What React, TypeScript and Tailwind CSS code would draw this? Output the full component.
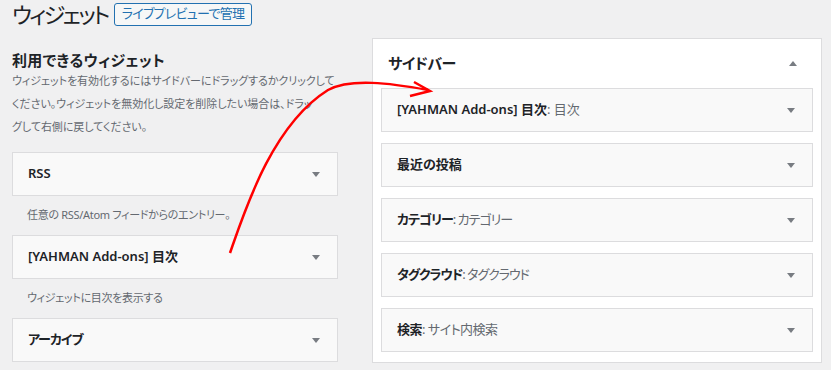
import React from "react"

const font = "font-['Noto_Sans','Noto_Sans_CJK_JP',sans-serif] [font-feature-settings:'palt']"

function Arrow({ up = false }: { up?: boolean }) {
  return (
    <svg width="8" height="5" viewBox="0 0 8 5" className="shrink-0">
      <polygon points={up ? "0,5 8,5 4,0" : "0,0 8,0 4,5"} fill="#787c82" />
    </svg>
  )
}

function WidgetBox({ title, sub, tight }: { title: string; sub?: string; tight?: string }) {
  return (
    <div className="h-[44px] flex items-center justify-between border border-[#dcdcde] bg-[#f9f9f9] pl-[15px] pr-[17px]">
      <div className={`text-[13px] text-[#1d2327] ${tight ?? ""}`}>
        <span className="font-semibold">{title}</span>
        {sub && <span className="text-[#646970]">: {sub}</span>}
      </div>
      <Arrow />
    </div>
  )
}

function Desc({ children }: { children: React.ReactNode }) {
  return (
    <div className="h-[39px] flex items-center pl-[15px] text-[11px] text-[#646970] tracking-[-0.3px]">
      {children}
    </div>
  )
}

export default function App() {
  const sidebar = [
    { title: "[YAHMAN Add-ons] 目次", sub: "目次" },
    { title: "最近の投稿" },
    { title: "カテゴリー", sub: "カテゴリー", tight: "tracking-[-1px]" },
    { title: "タグクラウド", sub: "タグクラウド", tight: "tracking-[-1px]" },
    { title: "検索", sub: "サイト内検索", tight: "tracking-[-0.5px]" },
  ]

  return (
    <div className={`relative w-[831px] h-[370px] overflow-hidden bg-[#f0f0f1] ${font}`}>
      {/* header */}
      <div className="flex items-center gap-[4px] pl-[12px] pt-[1px] h-[27px]">
        <h1 className="whitespace-nowrap pr-[2px] text-[22px] leading-[28px] text-[#1d2327] tracking-[-2.5px]">
          ウィジェット
        </h1>
        <button className="h-[23px] px-[7px] border border-[#2271b1] rounded-[3px] bg-[#f6f7f7] text-[13px] text-[#2271b1] tracking-[-0.7px]">
          ライブプレビューで管理
        </button>
      </div>

      <div className="flex pl-[12px] gap-[34px] mt-[11px]">
        {/* available widgets */}
        <div className="w-[326px] shrink-0">
          <h2 className="mt-[13px] text-[15px] leading-[18px] font-bold text-[#1d2327] tracking-[0.3px]">
            利用できるウィジェット
          </h2>
          <p className="text-[11px] leading-[23px] text-[#646970] tracking-[-0.05px] whitespace-nowrap">
            ウィジェットを有効化するにはサイドバーにドラッグするかクリックして
            <br />
            ください。ウィジェットを無効化し設定を削除したい場合は、ドラッ
            <br />
            グして右側に戻してください。
          </p>
          <div className="mt-[14px]">
            <WidgetBox title="RSS" />
            <Desc>任意の RSS/Atom フィードからのエントリー。</Desc>
            <WidgetBox title="[YAHMAN Add-ons] 目次" />
            <Desc>ウィジェットに目次を表示する</Desc>
            <WidgetBox title="アーカイブ" tight="tracking-[-1px]" />
          </div>
        </div>

        {/* sidebar area */}
        <div className="w-[450px] shrink-0 bg-white border border-[#dcdcde] px-[8px] pb-[10px]">
          <div className="h-[49px] flex items-center justify-between pl-[7px] pr-[16px]">
            <h3 className="text-[15px] font-bold text-[#1d2327] tracking-[-0.5px]">サイドバー</h3>
            <Arrow up />
          </div>
          <div className="flex flex-col gap-[11px]">
            {sidebar.map((w, i) => (
              <WidgetBox key={i} title={w.title} sub={w.sub} tight={w.tight} />
            ))}
          </div>
        </div>
      </div>

      {/* red annotation arrow */}
      <svg className="absolute inset-0 pointer-events-none" width="831" height="370">
        <path
          d="M230 253 C245 210 272 125 328 90 C350 78 390 83 428 90"
          fill="none"
          stroke="#ff0000"
          strokeWidth="2.5"
        />
        <path d="M414 82 L430 91 L410 96" fill="none" stroke="#ff0000" strokeWidth="2.5" />
      </svg>
    </div>
  )
}
